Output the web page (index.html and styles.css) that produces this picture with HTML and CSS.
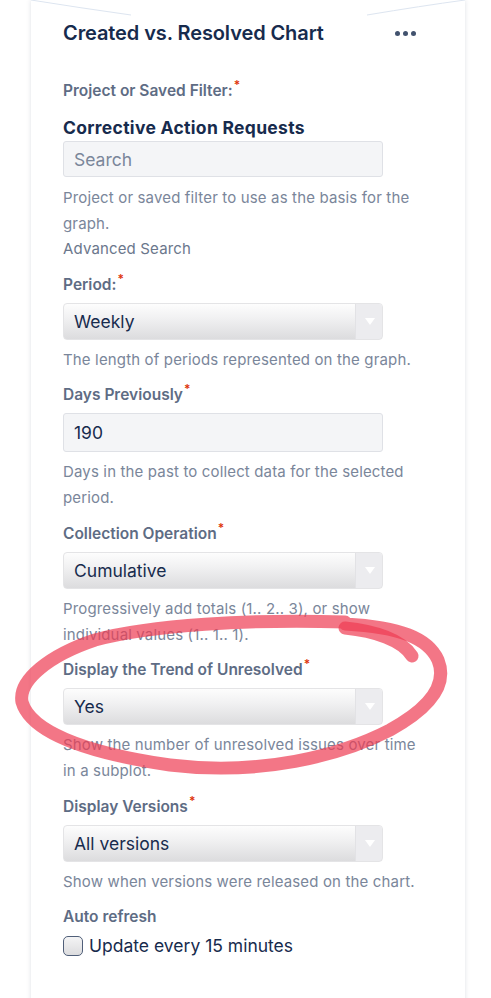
FILE: index.html
```html
<!DOCTYPE html>
<html>
<head>
<meta charset="utf-8">
<link rel="stylesheet" href="styles.css">
</head>
<body>
<div class="page">
  <div class="card">
    <svg class="card-top" width="434" height="20" viewBox="0 0 434 20">
      <path d="M0 0 Q 50 8 100 15" stroke="#dde5f0" stroke-width="1" fill="none"/>
      <path d="M336 15 Q 390 6 434 0" stroke="#dde5f0" stroke-width="1" fill="none"/>
    </svg>
    <div class="header">
      <h1 class="title">Created vs. Resolved Chart</h1>
      <div class="more"><span></span><span></span><span></span></div>
    </div>

    <div class="group first">
      <div class="label">Project or Saved Filter:<span class="req">*</span></div>
      <div class="filter-name">Corrective Action Requests</div>
      <div class="input search">Search</div>
      <div class="help">Project or saved filter to use as the basis for the graph.</div>
      <div class="help link">Advanced Search</div>
    </div>

    <div class="group">
      <div class="label">Period:<span class="req">*</span></div>
      <div class="select"><span class="val">Weekly</span><span class="arrow"></span></div>
      <div class="help">The length of periods represented on the graph.</div>
    </div>

    <div class="group">
      <div class="label">Days Previously<span class="req">*</span></div>
      <div class="input">190</div>
      <div class="help">Days in the past to collect data for the selected period.</div>
    </div>

    <div class="group">
      <div class="label">Collection Operation<span class="req">*</span></div>
      <div class="select"><span class="val">Cumulative</span><span class="arrow"></span></div>
      <div class="help">Progressively add totals (1.. 2.. 3), or show individual values (1.. 1.. 1).</div>
    </div>

    <div class="group">
      <div class="label">Display the Trend of Unresolved<span class="req">*</span></div>
      <div class="select"><span class="val">Yes</span><span class="arrow"></span></div>
      <div class="help">Show the number of unresolved issues over time in a subplot.</div>
    </div>

    <div class="group">
      <div class="label">Display Versions<span class="req">*</span></div>
      <div class="select"><span class="val">All versions</span><span class="arrow"></span></div>
      <div class="help">Show when versions were released on the chart.</div>
    </div>

    <div class="group">
      <div class="label">Auto refresh</div>
      <label class="check"><span class="box"></span><span class="check-text">Update every 15 minutes</span></label>
    </div>
  </div>

  <svg class="scribble" width="491" height="998" viewBox="0 0 491 998">
    <path d="M345 622 C 250 619, 150 625, 95 640 C 50 655, 18 680, 22 702 C 30 730, 80 752, 170 765 C 260 776, 340 756, 390 730 C 430 708, 448 685, 438 660 C 428 638, 400 627, 345 624" />
    <path d="M345 628 C 375 631, 402 640, 412 656" />
  </svg>
</div>
</body>
</html>
```

FILE: styles.css
```css
* { box-sizing: border-box; }
html, body { margin: 0; padding: 0; background: #ffffff; }
body {
  font-family: Inter, "Noto Sans", "Liberation Sans", sans-serif;
  color: #172b4d;
  width: 491px;
  height: 998px;
  overflow: hidden;
}
.page {
  position: relative;
  width: 491px;
  height: 998px;
}
.card {
  position: relative;
  margin-left: 31px;
  width: 434px;
  min-height: 1010px;
  background: #ffffff;
  box-shadow: 0 0 5px rgba(9, 30, 66, 0.13);
  padding: 21px 32px 0 32px;
}
.card-top {
  position: absolute;
  left: 0;
  top: 0;
}
.header {
  display: flex;
  align-items: center;
  justify-content: space-between;
  height: 24px;
}
.title {
  margin: 0;
  font-size: 20px;
  line-height: 24px;
  font-weight: 600;
  color: #172b4d;
  letter-spacing: -0.1px;
}
.more {
  display: flex;
  gap: 3px;
  margin-right: 17px;
}
.more span {
  width: 5px;
  height: 5px;
  border-radius: 50%;
  background: #42526e;
}
.group {
  display: flex;
  flex-direction: column;
  margin-top: 12.5px;
}
.group.first { margin-top: 36px; }
.label {
  font-size: 15.5px;
  line-height: 20px;
  font-weight: 600;
  color: #5e6c84;
  margin-bottom: 8px;
}
.first .label { margin-bottom: 16px; }
.req {
  color: #de350b;
  font-size: 12px;
  vertical-align: 7px;
  margin-left: 1px;
  line-height: 0;
}
.filter-name {
  font-size: 17.5px;
  line-height: 22px;
  font-weight: 700;
  color: #172b4d;
  letter-spacing: 0.3px;
  margin-bottom: 2px;
}
.input {
  width: 320px;
  height: 39px;
  background: #f4f5f7;
  border: 1px solid #dfe1e6;
  border-radius: 3px;
  padding: 0 10px;
  display: flex;
  align-items: center;
  font-size: 17.5px;
  color: #172b4d;
}
.input.search {
  height: 36px;
  color: #7a869a;
}
.select {
  width: 320px;
  height: 37px;
  border-radius: 4px;
  border: 1px solid #e4e4e6;
  background: linear-gradient(#fdfdfd, #f1f1f2 40%, #dcdcde);
  display: flex;
  align-items: center;
  overflow: hidden;
}
.val {
  flex: 1;
  padding-left: 10px;
  font-size: 17.5px;
  color: #172b4d;
}
.arrow {
  width: 27px;
  height: 100%;
  background: #ececef;
  border-left: 1px solid #e2e2e5;
  position: relative;
}
.arrow::after {
  content: "";
  position: absolute;
  left: 9px;
  top: 14px;
  border-left: 5px solid transparent;
  border-right: 5px solid transparent;
  border-top: 7px solid #ffffff;
}
.help {
  max-width: 362px;
  margin-top: 7px;
  font-size: 15px;
  line-height: 26px;
  color: #7a869a;
  letter-spacing: 0.15px;
}
.first .help { margin-top: 8px; }
.help.link {
  margin-top: -1px;
  color: #6b778c;
}
.check {
  display: flex;
  align-items: center;
  gap: 6px;
  margin-top: 0;
}
.box {
  width: 20px;
  height: 20px;
  border: 1.5px solid #505f79;
  border-radius: 5px;
  background: linear-gradient(#f4f4f5, #dcdcde);
}
.check-text {
  font-size: 17.5px;
  color: #172b4d;
}
.scribble {
  position: absolute;
  left: 0;
  top: 0;
  pointer-events: none;
}
.scribble path {
  fill: none;
  stroke: rgba(238, 60, 82, 0.7);
  stroke-width: 13;
  stroke-linecap: round;
  stroke-linejoin: round;
}
```
